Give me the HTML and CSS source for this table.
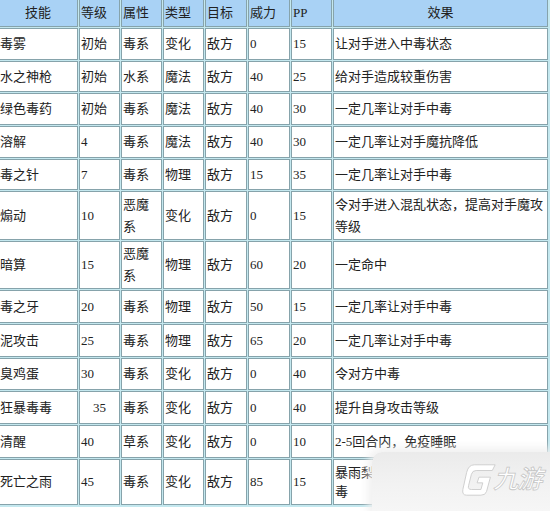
FILE: index.html
```html
<!DOCTYPE html>
<html lang="zh-CN">
<head>
<meta charset="utf-8">
<title>技能表</title>
<link rel="stylesheet" href="styles.css">
</head>
<body>
<table class="skills">
  <tr class="head">
    <th class="c1 center">技能</th>
    <th class="c2">等级</th>
    <th class="c3">属性</th>
    <th class="c4">类型</th>
    <th class="c5">目标</th>
    <th class="c6">威力</th>
    <th class="c7">PP</th>
    <th class="c8 center">效果</th>
  </tr>
  <tr><td>毒雾</td><td>初始</td><td>毒系</td><td>变化</td><td>敌方</td><td>0</td><td>15</td><td>让对手进入中毒状态</td></tr>
  <tr class="r31"><td>水之神枪</td><td>初始</td><td>水系</td><td>魔法</td><td>敌方</td><td>40</td><td>25</td><td>给对手造成较重伤害</td></tr>
  <tr><td>绿色毒药</td><td>初始</td><td>毒系</td><td>魔法</td><td>敌方</td><td>40</td><td>30</td><td>一定几率让对手中毒</td></tr>
  <tr><td>溶解</td><td>4</td><td>毒系</td><td>魔法</td><td>敌方</td><td>40</td><td>30</td><td>一定几率让对手魔抗降低</td></tr>
  <tr class="r31"><td>毒之针</td><td>7</td><td>毒系</td><td>物理</td><td>敌方</td><td>15</td><td>35</td><td>一定几率让对手中毒</td></tr>
  <tr class="r49"><td>煽动</td><td>10</td><td>恶魔系</td><td>变化</td><td>敌方</td><td>0</td><td>15</td><td>令对手进入混乱状态，提高对手魔攻等级</td></tr>
  <tr class="r48"><td>暗算</td><td>15</td><td>恶魔系</td><td>物理</td><td>敌方</td><td>60</td><td>20</td><td>一定命中</td></tr>
  <tr class="r33"><td>毒之牙</td><td>20</td><td>毒系</td><td>物理</td><td>敌方</td><td>50</td><td>15</td><td>一定几率让对手中毒</td></tr>
  <tr class="r33"><td>泥攻击</td><td>25</td><td>毒系</td><td>物理</td><td>敌方</td><td>65</td><td>20</td><td>一定几率让对手中毒</td></tr>
  <tr><td>臭鸡蛋</td><td>30</td><td>毒系</td><td>变化</td><td>敌方</td><td>0</td><td>40</td><td>令对方中毒</td></tr>
  <tr class="r33"><td>狂暴毒毒</td><td class="center">35</td><td>毒系</td><td>变化</td><td>敌方</td><td>0</td><td>40</td><td>提升自身攻击等级</td></tr>
  <tr class="r33"><td>清醒</td><td>40</td><td>草系</td><td>变化</td><td>敌方</td><td>0</td><td>10</td><td>2-5回合内，免疫睡眠</td></tr>
  <tr class="r46"><td>死亡之雨</td><td>45</td><td>毒系</td><td>变化</td><td>敌方</td><td>85</td><td>15</td><td class="tight">暴雨梨花针攻击，一定几率让对手中毒</td></tr>
</table>

<div class="wm">
  <svg class="wm-logo" viewBox="0 0 40 40" width="38" height="38" aria-hidden="true">
    <path d="M15 4 L37 4 L34 10 L17 10 Q13 10 12 14 L9 26 Q8 30 12 30 L22 30 L24 23 L18 23 L20 17 L32 17 L28 32 Q27 36 22 36 L7 36 Q2 36 3 30 L7 12 Q9 4 15 4 Z" fill="#ffffff" stroke="#cdcdcd" stroke-width="1" stroke-linejoin="round"/>
  </svg>
  <span class="wm-text">九游</span>
</div>
</body>
</html>
```

FILE: styles.css
```css
html, body {
  margin: 0;
  padding: 0;
  background: #ffffff;
}

body {
  position: relative;
  width: 550px;
  height: 511px;
  overflow: hidden;
}

.skills {
  table-layout: fixed;
  width: 553px;
  margin: -4px 0 0 -4px;
  border-collapse: separate;
  border-spacing: 1px;
  border: 1px solid #c4e8ef;
  background: #c4e8ef;
  font-family: "Liberation Serif", "Noto Sans CJK SC", serif;
  font-size: 13px;
  color: #222222;
}

.skills th,
.skills td {
  box-sizing: border-box;
  border: 1px solid #86a3ab;
  padding: 0 1px;
  height: 32px;
  line-height: 22px;
  text-align: left;
  vertical-align: middle;
  font-weight: normal;
  background: #ffffff;
  overflow: hidden;
}

.skills .head th {
  height: 29px;
  background: #a9d2f5;
}

.skills .center {
  text-align: center;
}

.c1 { width: 80px; }
.c2 { width: 41px; }
.c3 { width: 41px; }
.c4 { width: 41px; }
.c5 { width: 42px; }
.c6 { width: 42px; }
.c7 { width: 41px; }
.c8 { width: 215px; }

.skills .r31 td { height: 31px; }
.skills .r33 td { height: 33px; }
.skills .r49 td { height: 49px; }
.skills .r48 td { height: 48px; }
.skills .r46 td { height: 46px; }

.skills td.tight {
  line-height: 19px;
}

.wm {
  position: absolute;
  left: 372px;
  top: 452px;
  width: 178px;
  height: 59px;
  background: linear-gradient(180deg, #ebebeb 0%, #f2f2f2 55%, #f6f6f6 100%);
  border-top-left-radius: 10px;
  box-shadow: 0 0 8px 4px rgba(238, 238, 238, 0.9);
}

.wm-logo {
  position: absolute;
  left: 88px;
  top: 9px;
}

.wm-text {
  position: absolute;
  left: 124px;
  top: 10px;
  font-family: "Noto Sans CJK SC", sans-serif;
  font-size: 25px;
  line-height: 30px;
  font-weight: 500;
  color: #ffffff;
  -webkit-text-stroke: 0.8px #c6c6c6;
  transform: skewX(-14deg);
  letter-spacing: -1px;
}
```
